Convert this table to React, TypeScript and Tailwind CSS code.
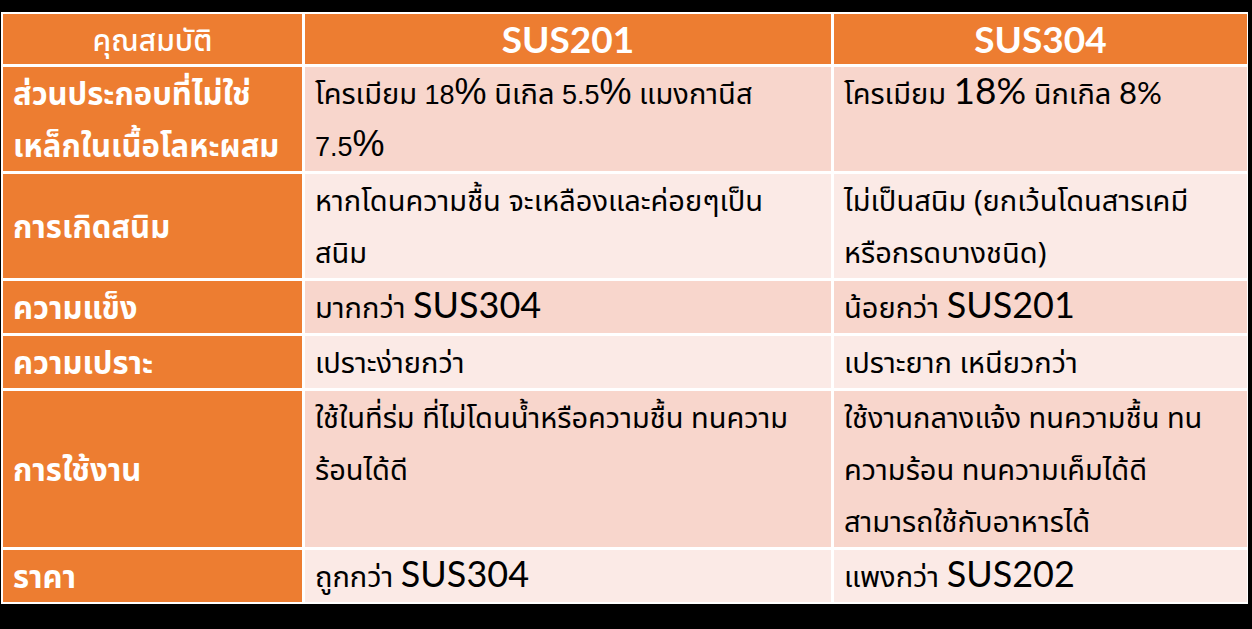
import React from "react";

const thai = "font-['Noto_Sans','Noto_Sans_Thai','DejaVu_Sans',sans-serif]";
const latin = "font-['Lato','Open_Sans',sans-serif]";

function Head({ children }: { children: React.ReactNode }) {
  return (
    <div className="flex h-[50px] items-center bg-[#ED7D31] pl-[10px] text-white">
      {children}
    </div>
  );
}

function Label({ children }: { children: React.ReactNode }) {
  return (
    <div className={`flex items-center bg-[#ED7D31] pl-[10px] text-[31px] leading-[52px] font-bold text-white ${thai}`}>
      <div>{children}</div>
    </div>
  );
}

function Cell({ children, dark }: { children: React.ReactNode; dark?: boolean }) {
  return (
    <div
      className={`${dark ? "bg-[#F8D6CC]" : "bg-[#FBEAE6]"} pl-[10px] pr-2 text-[29px] leading-[52px] text-black ${thai}`}
    >
      {children}
    </div>
  );
}

const Sus = ({ t }: { t: string }) => <span className={`${latin} text-[36px] leading-none`}>{t}</span>;
const Pct = ({ t }: { t: string }) => (
  <span className="font-['Liberation_Sans',sans-serif] text-[27px] leading-none">
    {t}
    <span className="text-[36px] leading-none">%</span>
  </span>
);

export default function App() {
  return (
    <div className="h-[629px] w-[1252px] bg-black pt-[12px] pl-[1px]">
      <div className="grid w-[1247px] grid-cols-[299px_526px_413px] gap-[3px] bg-white p-[2px]">
        <Head>
          <div className={`w-full pr-[10px] text-center text-[30px] font-medium ${thai}`}>คุณสมบัติ</div>
        </Head>
        <Head>
          <div className={`w-full pr-[10px] text-center text-[37px] font-bold ${latin}`}>SUS201</div>
        </Head>
        <Head>
          <div className={`w-full pr-[10px] text-center text-[37px] font-bold ${latin}`}>SUS304</div>
        </Head>

        <Label>
          ส่วนประกอบที่ไม่ใช่
          <br />
          เหล็กในเนื้อโลหะผสม
        </Label>
        <Cell dark>
          โครเมียม <Pct t="18" /> นิเกิล <Pct t="5.5" /> แมงกานีส
          <br />
          <Pct t="7.5" />
        </Cell>
        <Cell dark>
          โครเมียม <span className={`${latin} text-[37px] leading-none`}>18%</span> นิกเกิล{" "}
          <span className={`${latin} text-[31px] leading-none`}>8%</span>
        </Cell>

        <Label>การเกิดสนิม</Label>
        <Cell>
          หากโดนความชื้น จะเหลืองและค่อยๆเป็น
          <br />
          สนิม
        </Cell>
        <Cell>
          ไม่เป็นสนิม (ยกเว้นโดนสารเคมี
          <br />
          หรือกรดบางชนิด)
        </Cell>

        <Label>ความแข็ง</Label>
        <Cell dark>
          มากกว่า <Sus t="SUS304" />
        </Cell>
        <Cell dark>
          น้อยกว่า <Sus t="SUS201" />
        </Cell>

        <Label>ความเปราะ</Label>
        <Cell>เปราะง่ายกว่า</Cell>
        <Cell>เปราะยาก เหนียวกว่า</Cell>

        <Label>การใช้งาน</Label>
        <Cell dark>
          ใช้ในที่ร่ม ที่ไม่โดนน้ำหรือความชื้น ทนความ
          <br />
          ร้อนได้ดี
        </Cell>
        <Cell dark>
          ใช้งานกลางแจ้ง ทนความชื้น ทน
          <br />
          ความร้อน ทนความเค็มได้ดี
          <br />
          สามารถใช้กับอาหารได้
        </Cell>

        <Label>ราคา</Label>
        <Cell>
          ถูกกว่า <Sus t="SUS304" />
        </Cell>
        <Cell>
          แพงกว่า <Sus t="SUS202" />
        </Cell>
      </div>
    </div>
  );
}
